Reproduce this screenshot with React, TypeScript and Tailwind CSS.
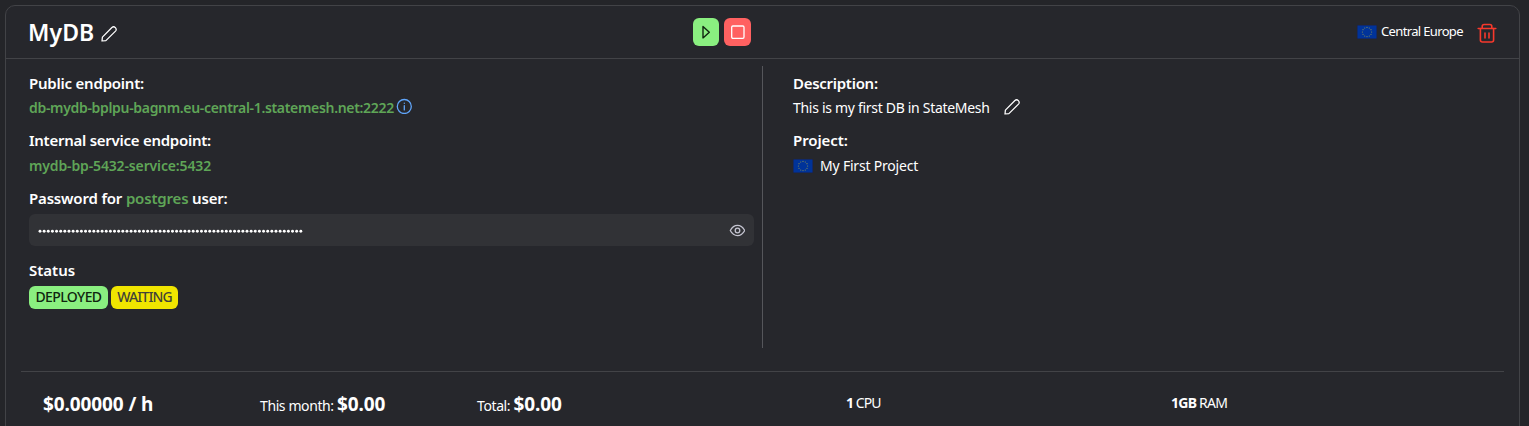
import React from "react";

function PencilIcon({ className }: { className?: string }) {
  return (
    <svg viewBox="0 0 16 16" className={className} fill="none" stroke="currentColor" strokeWidth="1.25" strokeLinejoin="round" strokeLinecap="round">
      <path d="M1 15 L1.4 11.1 L10.9 1.5 Q12.6 0 14.4 1.6 Q16 3.4 14.5 5.1 L4.9 14.6 Z" />
    </svg>
  );
}

function TrashIcon() {
  return (
    <svg viewBox="0 0 20 20" className="mt-px h-5 w-5 text-[#f8392c]" fill="none" stroke="currentColor" strokeWidth="1.6" strokeLinecap="round" strokeLinejoin="round">
      <path d="M1.2 5.5H18.8" />
      <path d="M5.2 5.2V3.4Q5.2 1.5 7.2 1.5H12.8Q14.8 1.5 14.8 3.4V5.2" />
      <path d="M3.4 5.5V17Q3.4 19 5.4 19H14.6Q16.6 19 16.6 17V5.5" />
      <path d="M8 10V15M12 10V15" />
    </svg>
  );
}

function EyeIcon() {
  return (
    <svg viewBox="0 0 16 16" className="h-4 w-4 text-[#c4c4d0]" fill="none" stroke="currentColor" strokeWidth="1.3">
      <path d="M1.3 8.5Q4 3.4 8.5 3.4T15.7 8.5Q13 13.6 8.5 13.6T1.3 8.5Z" strokeLinejoin="round" />
      <circle cx="8.5" cy="8.5" r="2.3" />
    </svg>
  );
}

function InfoIcon() {
  return (
    <svg viewBox="0 0 16 16" className="h-4 w-4 text-[#60a5fa]" fill="none" stroke="currentColor" strokeWidth="1.3" strokeLinecap="round">
      <circle cx="8.3" cy="8.5" r="7" />
      <path d="M8.3 7.7V11.9M8.3 5.1V5.3" />
    </svg>
  );
}

const STARS = Array.from({ length: 12 }, (_, i) => {
  const a = (i * Math.PI) / 6;
  return { x: 10 + 4.6 * Math.sin(a), y: 7 - 4.6 * Math.cos(a) };
});

function EuFlag() {
  return (
    <svg viewBox="0 0 20 14" className="h-3.5 w-5 shrink-0">
      <rect width="20" height="14" fill="#20213c" />
      <rect x="0.5" y="0.5" width="19" height="13" fill="#003399" />
      {STARS.map((s, i) => (
        <circle key={i} cx={s.x} cy={s.y} r="0.6" fill="#7f8a58" />
      ))}
    </svg>
  );
}

function Label({ children, className }: { children: React.ReactNode; className: string }) {
  return <div className={`h-6 text-[15px] leading-[22px] font-semibold whitespace-nowrap ${className}`}>{children}</div>;
}

export default function App() {
  return (
    <div className="h-[426px] overflow-hidden bg-[#242529] pt-[5px] pr-[9px] pl-[5px] font-['Noto_Sans',sans-serif] text-white">
      <div className="h-[440px] rounded-t-[10px] border border-[#424347] bg-[#26272c]">
        <header className="flex h-[53px] items-center border-b border-[#424347] pr-[22px] pl-[22px]">
          <div className="flex w-[665px] items-center">
            <h1 className="w-[73px] text-[23px] leading-8 font-semibold tracking-[0.1px]">MyDB</h1>
            <PencilIcon className="mt-[3px] h-4 w-4" />
          </div>
          <div className="flex gap-[5px]">
            <button className="flex h-7 w-[26px] items-center justify-center rounded-md bg-[#8aef80]">
              <svg viewBox="0 0 10 14" className="h-3.5 w-2.5" fill="none" stroke="#10240f" strokeWidth="1.4" strokeLinejoin="round">
                <path d="M2 1.5V12.9L8.3 7.2Z" />
              </svg>
            </button>
            <button className="flex h-7 w-[27px] items-center justify-center rounded-md bg-[#ff6161]">
              <svg viewBox="0 0 14 14" className="h-3.5 w-3.5" fill="none" stroke="white" strokeWidth="1.3">
                <rect x="0.7" y="1" width="12.3" height="12.3" rx="1.2" />
              </svg>
            </button>
          </div>
          <div className="ml-auto flex items-center">
            <EuFlag />
            <span className="ml-1 w-[96px] text-[13px] tracking-[-0.65px] whitespace-nowrap">Central Europe</span>
            <TrashIcon />
          </div>
        </header>

        <main className="flex pt-[7px]">
          <section className="h-[282px] w-[757px] border-r border-[#55565b] pt-[6px] pr-2 pl-[23px]">
            <Label className="tracking-[-0.22px]">Public endpoint:</Label>
            <div className="flex h-6 items-center">
              <span className="mb-0.5 text-[14px] font-semibold tracking-[-0.32px] whitespace-nowrap text-[#5fa557]">db-mydb-bplpu-bagnm.eu-central-1.statemesh.net:2222</span>
              <span className="mb-1 ml-[2px]"><InfoIcon /></span>
            </div>
            <Label className="mt-[9px] tracking-[-0.26px]">Internal service endpoint:</Label>
            <div className="mt-px h-6 text-[14px] leading-6 font-semibold tracking-[-0.14px] whitespace-nowrap text-[#5fa557]">mydb-bp-5432-service:5432</div>
            <Label className="mt-[9px] tracking-[-0.18px]">
              Password for <span className="text-[#5fa557]">postgres</span> user:
            </Label>
            <div className="mt-[3px] flex h-8 items-center justify-between rounded-md bg-[#313236] pr-[9px] pl-[9px]">
              <svg viewBox="0 0 266 4" className="mt-[2px] h-1 w-[266px]" fill="white">
                {Array.from({ length: 64 }, (_, i) => (
                  <circle key={i} cx={2 + i * 4.14} cy="2.3" r="1.45" />
                ))}
              </svg>
              <EyeIcon />
            </div>
            <Label className="mt-[13px] tracking-[0px]">Status</Label>
            <div className="mt-[3px] flex gap-[3px] text-[14px] leading-[22px] font-medium">
              <span className="h-[23px] w-[79px] rounded-md bg-[#8aef80] text-center tracking-[-0.6px] text-[#10240f]">DEPLOYED</span>
              <span className="h-[23px] w-[67px] rounded-md bg-[#f0e500] text-center tracking-[-0.85px] text-[#414238]">WAITING</span>
            </div>
          </section>
          <section className="pt-[6px] pl-[30px]">
            <Label className="tracking-[-0.28px]">Description:</Label>
            <div className="flex h-6 items-center">
              <span className="mb-0.5 w-[211px] text-[14px] tracking-[-0.3px] whitespace-nowrap">This is my first DB in StateMesh</span>
              <PencilIcon className="mb-[3px] h-4 w-4" />
            </div>
            <Label className="mt-[9px] tracking-[-0.1px]">Project:</Label>
            <div className="mt-px flex h-6 items-center gap-[7px]">
              <EuFlag />
              <span className="mb-0.5 text-[14px] tracking-[-0.2px]">My First Project</span>
            </div>
          </section>
        </main>

        <footer className="mt-[23px] mr-[15px] ml-[15px] flex border-t border-[#424347] pt-[18px] pl-[22px] leading-7 whitespace-nowrap">
          <div className="w-[217px] text-[19px] font-bold tracking-[-0.1px]">$0.00000 / h</div>
          <div className="w-[217px] text-[14px] tracking-[-0.4px]">
            This month: <b className="text-[19px] tracking-[-0.1px]">$0.00</b>
          </div>
          <div className="w-[369px] text-[14px] tracking-[-0.4px]">
            Total: <b className="text-[19px] tracking-[-0.1px]">$0.00</b>
          </div>
          <div className="w-[325px] text-[14px] leading-[26px] tracking-[-0.9px]"><b>1</b> CPU</div>
          <div className="text-[14px] leading-[26px] tracking-[-0.75px]"><b>1GB</b> RAM</div>
        </footer>
      </div>
    </div>
  );
}
